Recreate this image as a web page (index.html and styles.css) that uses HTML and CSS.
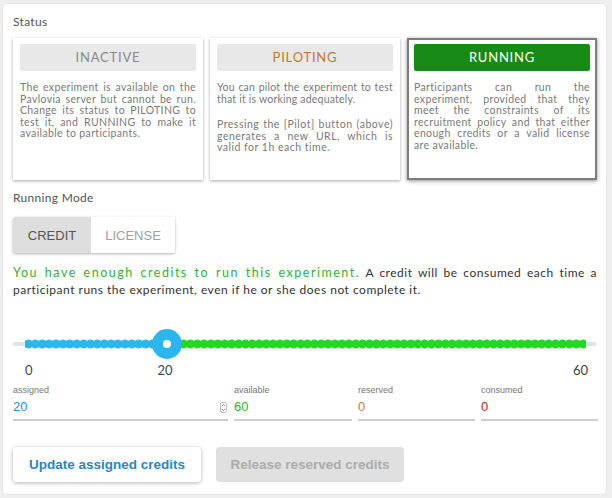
FILE: index.html
```html
<!DOCTYPE html>
<html>
<head>
<meta charset="utf-8">
<link rel="stylesheet" href="styles.css">
</head>
<body>
<div class="panel">
  <div class="section-label">Status</div>
  <div class="cards">
    <div class="card">
      <div class="card-head inactive">INACTIVE</div>
      <p class="card-text">The experiment is available on the Pavlovia server but cannot be run. Change its status to PILOTING to test it, and RUNNING to make it available to participants.</p>
    </div>
    <div class="card">
      <div class="card-head piloting">PILOTING</div>
      <p class="card-text para1">You can pilot the experiment to test that it is working adequately.</p>
      <p class="card-text para2">Pressing the [Pilot] button (above) generates a new URL, which is valid for 1h each time.</p>
    </div>
    <div class="card selected">
      <div class="card-head running">RUNNING</div>
      <p class="card-text">Participants can run the experiment, provided that they meet the constraints of its recruitment policy and that either enough credits or a valid license are available.</p>
    </div>
  </div>

  <div class="section-label mode-label">Running Mode</div>
  <div class="toggle">
    <div class="seg active">CREDIT</div>
    <div class="seg">LICENSE</div>
  </div>

  <p class="message"><span class="ok">You have enough credits to run this experiment.</span> A credit will be consumed each time a participant runs the experiment, even if he or she does not complete it.</p>

  <div class="slider">
    <div class="track">
      <div class="dots blue"></div>
      <div class="dots green"></div>
    </div>
    <div class="thumb"><div class="thumb-dot"></div></div>
  </div>
  <div class="ticks">
    <span class="tick t0">0</span>
    <span class="tick t20">20</span>
    <span class="tick t60">60</span>
  </div>

  <div class="fields">
    <div class="field f-assigned">
      <div class="f-label">assigned</div>
      <div class="f-value blue-text">20<span class="spin"><svg width="7" height="11" viewBox="0 0 7 11"><rect x="0.5" y="0.5" width="6" height="10" rx="2" fill="none" stroke="#bbb"/><path d="M2 4 L3.5 2.5 L5 4 M2 7 L3.5 8.5 L5 7" fill="none" stroke="#666" stroke-width="0.8"/></svg></span></div>
    </div>
    <div class="field f-available">
      <div class="f-label">available</div>
      <div class="f-value green-text">60</div>
    </div>
    <div class="field f-reserved">
      <div class="f-label">reserved</div>
      <div class="f-value orange-text">0</div>
    </div>
    <div class="field f-consumed">
      <div class="f-label">consumed</div>
      <div class="f-value red-text">0</div>
    </div>
  </div>

  <div class="buttons">
    <button class="btn primary">Update assigned credits</button>
    <button class="btn disabled">Release reserved credits</button>
  </div>
</div>
</body>
</html>
```

FILE: styles.css
```css
* { box-sizing: border-box; }
html, body { margin: 0; padding: 0; }
body {
  background: #efefef;
  width: 612px;
  height: 498px;
  overflow: hidden;
  font-family: Lato, "Open Sans", sans-serif;
  color: #555;
}
.panel {
  margin: 3px 5px 0 2px;
  height: 492px;
  background: #fff;
  border: 1px solid #e4e4e4;
  border-radius: 5px;
  padding: 10px 9px 0 10px;
}
.section-label {
  font-size: 12px;
  color: #555;
  height: 16px;
  line-height: 16px;
  letter-spacing: 0.3px;
}
.cards {
  margin-top: 8px;
  display: grid;
  grid-template-columns: 190px 190px 190px;
  column-gap: 7px;
}
.card {
  height: 142px;
  background: #fff;
  border: 2px solid transparent;
  padding: 4px 5px;
  box-shadow: 0 1px 3px rgba(0,0,0,0.35);
}
.card.selected {
  border-color: #7d7d7d;
  box-shadow: 0 1px 4px rgba(0,0,0,0.45);
}
.card-head {
  height: 27px;
  line-height: 27px;
  text-align: center;
  background: #e8e8e8;
  border-radius: 2px;
  font-size: 13px;
  letter-spacing: 0.8px;
}
.card-head.inactive { color: #8a8a8a; }
.card-head.piloting { color: #c0782e; }
.card-head.running { background: #178a17; color: #fff; }
.card-text {
  margin: 11px 0 0;
  font-size: 10.5px;
  line-height: 11.6px;
  color: #7a7a7a;
  text-align: justify;
  letter-spacing: 0.35px;
}
.card-text.para1 { letter-spacing: 0.2px; }
.card-text.para2 { margin-top: 14px; letter-spacing: 0.5px; }

.mode-label { margin-top: 10px; }
.toggle {
  margin-top: 11px;
  display: inline-flex;
  height: 36px;
  box-shadow: 0 1px 3px rgba(0,0,0,0.3);
  border-radius: 2px;
  overflow: hidden;
  font-family: "Liberation Sans", Arial, sans-serif;
  font-size: 13px;
}
.seg {
  display: flex;
  align-items: center;
  justify-content: center;
  color: #a0a0a0;
  background: #fff;
  width: 84px;
}
.seg.active {
  width: 78px;
  background: #dedede;
  color: #555;
}
.message {
  margin: 11px 0 0;
  font-size: 12px;
  line-height: 17px;
  color: #333;
  text-align: justify;
  letter-spacing: 0.5px;
}
.ok { color: #2fb32f; letter-spacing: 1.5px; font-size: 12.5px; }

.slider {
  position: relative;
  margin-top: 31px;
  height: 30px;
}
.track {
  position: absolute;
  left: 0;
  right: 0;
  top: 13px;
  height: 4px;
  background: #dfe3ee;
  border-radius: 2px;
}
.dots {
  position: absolute;
  top: -3px;
  height: 10px;
  background-size: 6.9px 10px;
  background-repeat: repeat-x;
}
.dots.blue {
  left: 12px;
  width: 142px;
  background-image: radial-gradient(circle at 50% 50%, #2bb7ee 0, #2bb7ee 4.2px, transparent 4.8px);
}
.dots.green {
  left: 167px;
  width: 406px;
  background-image: radial-gradient(circle at 50% 50%, #22d822 0, #22d822 4.2px, transparent 4.8px);
}
.thumb {
  position: absolute;
  left: 139px;
  top: 0;
  width: 30px;
  height: 30px;
  border-radius: 50%;
  background: #2bb7ee;
  display: flex;
  align-items: center;
  justify-content: center;
}
.thumb-dot {
  width: 8px;
  height: 8px;
  border-radius: 50%;
  background: #fff;
}
.ticks {
  display: flex;
  height: 16px;
  margin-top: 3px;
  font-size: 13px;
  color: #444;
  line-height: 16px;
}
.tick.t0 { margin-left: 12px; }
.tick.t20 { margin-left: 125px; }
.tick.t60 { margin-left: auto; margin-right: 9px; }

.fields {
  margin-top: 5px;
  display: grid;
  grid-template-columns: 215px 118px 117px 117px;
  column-gap: 6px;
  font-family: "Liberation Sans", Arial, sans-serif;
}
.field {
  border-bottom: 2px solid #cfcfcf;
  height: 38px;
}
.f-label {
  font-size: 9px;
  color: #777;
  height: 14px;
  line-height: 14px;
}
.f-value {
  font-size: 13px;
  line-height: 20px;
  display: flex;
  justify-content: space-between;
  align-items: center;
}
.spin { display: flex; margin-right: 1px; }
.blue-text { color: #2a8fd4; }
.green-text { color: #2fb32f; }
.orange-text { color: #d0782e; }
.red-text { color: #c9252b; }

.buttons {
  margin-top: 26px;
  display: flex;
  gap: 15px;
}
.btn {
  height: 35px;
  width: 188px;
  border: none;
  border-radius: 4px;
  font-family: "Liberation Sans", Arial, sans-serif;
  font-size: 13.5px;
  padding: 0;
}
.btn.primary {
  background: #fff;
  color: #2a86c2;
  box-shadow: 0 1px 4px rgba(0,0,0,0.3);
  font-weight: bold;
}
.btn.disabled {
  background: #e0e0e0;
  color: #acacac;
  font-weight: bold;
}
```
